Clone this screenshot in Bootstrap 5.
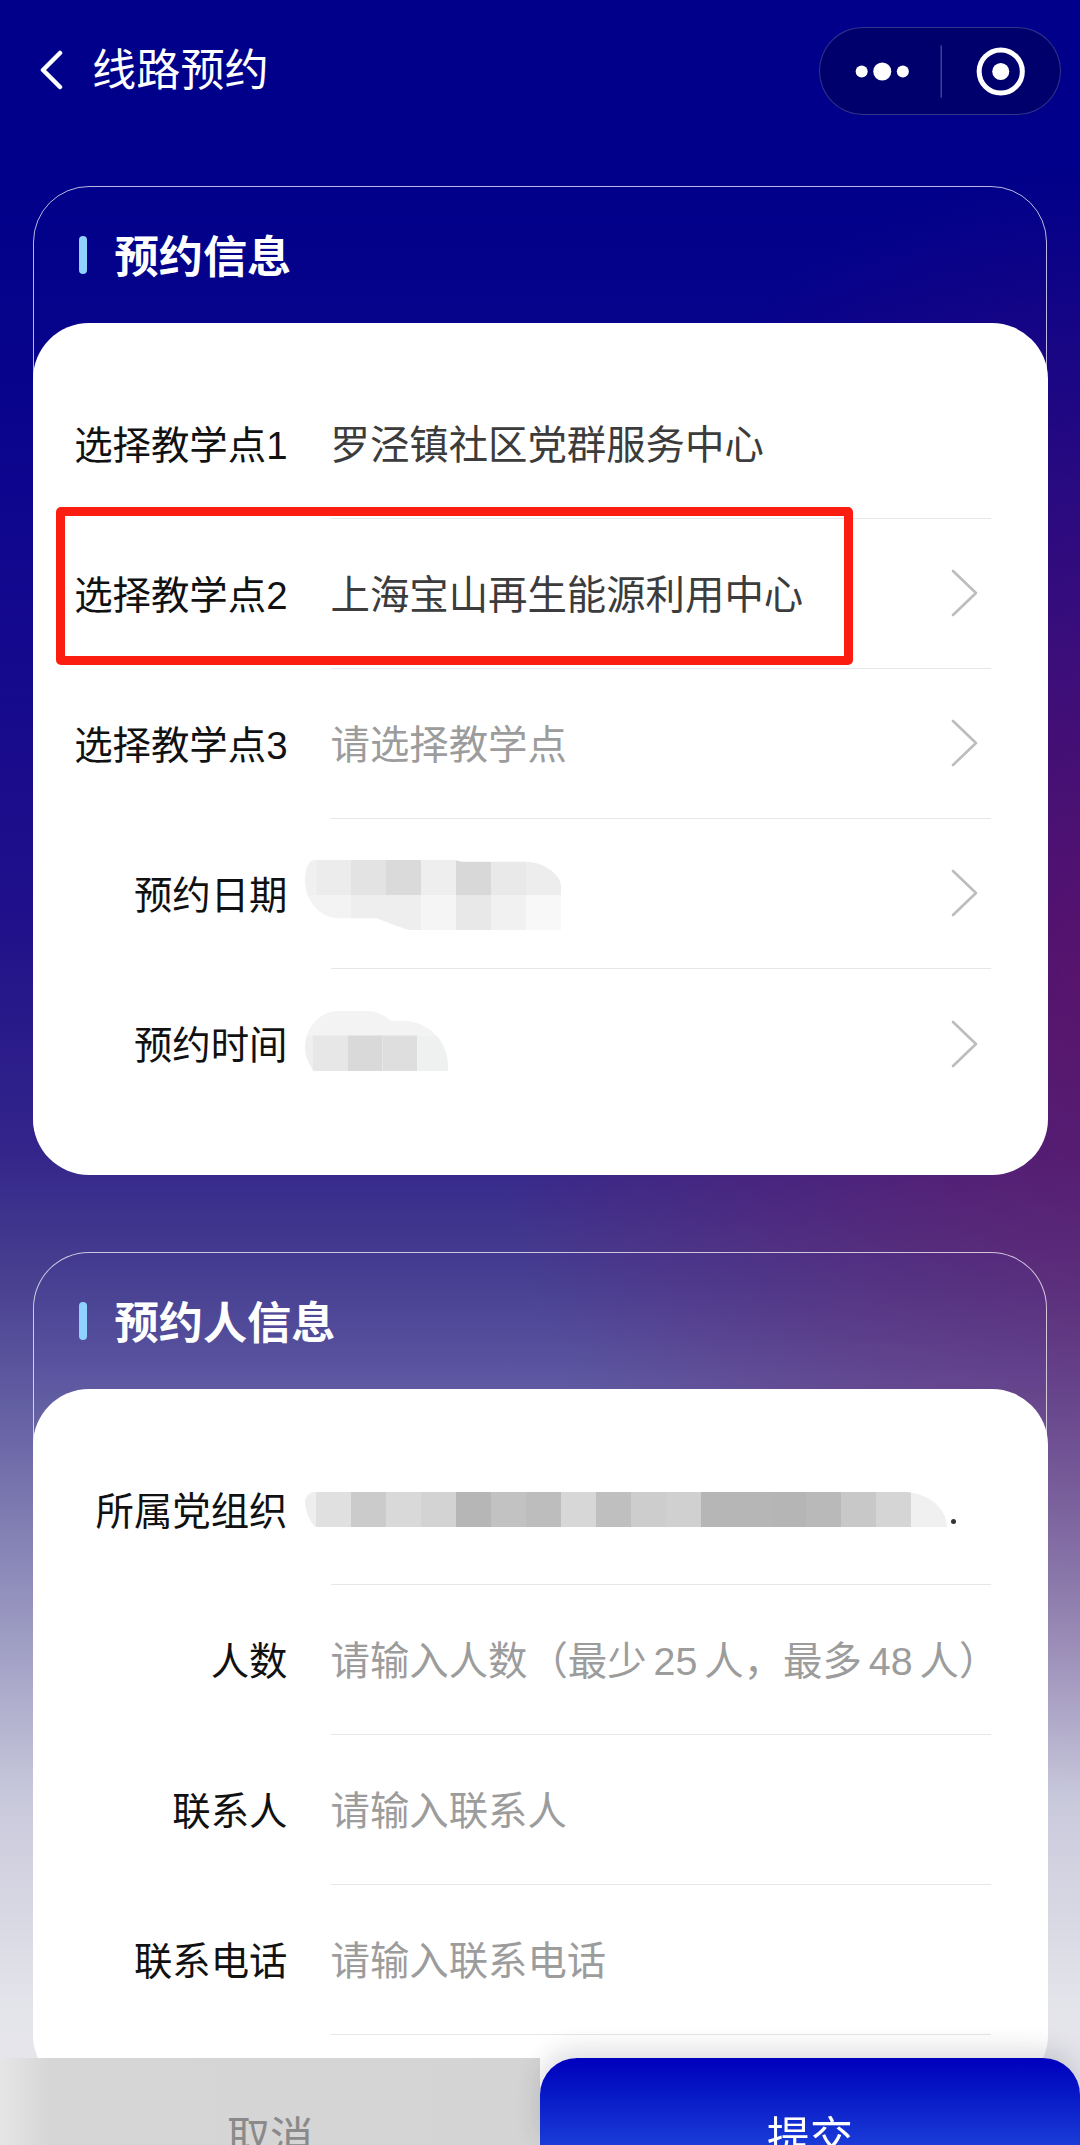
<!DOCTYPE html>
<html lang="zh-CN">
<head>
<meta charset="utf-8">
<title>线路预约</title>
<link rel="stylesheet" href="https://cdn.jsdelivr.net/npm/bootstrap@5.3.0/dist/css/bootstrap.min.css">
<style>
html,body{height:2145px;overflow:hidden}
body{margin:0;font-family:"Liberation Sans","Noto Sans CJK SC",sans-serif;
background:
 radial-gradient(ellipse 640px 820px at 1120px 980px,rgba(118,20,92,.66),rgba(118,20,92,0) 100%),
 linear-gradient(180deg,#00008a 0,#00008a 180px,#12088e 600px,#1f0f8a 900px,#33258a 1150px,#494090 1280px,#615da2 1400px,#9492bd 1600px,#c9c9dc 1800px,#e3e3ea 2000px,#e8e8ec 2145px)}
.top-bar{height:141px;margin-bottom:45px;padding:0 19px 0 39px}
.back-ico{width:24px;height:40px;margin-right:29px;flex:none}
.page-title{font-size:44.2px;line-height:1;color:#fff;padding-top:2px}
.capsule{width:242px;height:88px;border-radius:44px;border:1.5px solid rgba(255,255,255,.2);background:rgba(0,0,70,.42)}
.capsule svg{display:block;width:100%;height:100%}
.panel{margin:0 33px 78px;border:1.5px solid rgba(255,255,255,.72);border-radius:56px}
.panel-soft{background:linear-gradient(180deg,rgba(50,50,170,.08),rgba(90,90,200,.06) 130px,rgba(90,90,200,0) 140px)}
.panel-head{height:135.5px;padding-left:44.5px}
.panel-tick{width:8px;height:38px;border-radius:4px;background:#90d2ff;margin-right:28px}
.panel-name{font-size:44.2px;line-height:1;font-weight:700;color:#fff;padding-top:6px}
.sheet{margin:0 -1.5px -1.5px;padding:46px 0 56px;background:#fff;border-radius:56px}
.line{height:150px;font-size:38.4px;line-height:1}
.line-label{width:255px;flex:none;color:#111;padding-top:6px}
.line-body{margin:0 57px 0 43px;border-bottom:1.5px solid #e6e6e6;font-size:39.4px;color:#3c3c3c;min-width:0}
.line-body>span{padding-top:6px}
.hint{color:#9c9c9c}
.gap-paren{margin-left:1px}
.tight-words{word-spacing:-4px}
.chev{width:27px;height:48px;margin-right:13px;flex:none}
.redact{margin-left:-26px;flex:none;display:block}
.redact-date{margin-top:4px}
.redact-time{margin-bottom:6px}
.dot-end{margin-left:4px;margin-top:24px;width:5px;height:5px;border-radius:50%;background:#333;flex:none}
.mark-box{left:23px;top:-12px;width:797px;height:158px;border:9px solid #fb1e10;border-radius:5px;z-index:2}
.action-bar{height:87px;z-index:5}
.act{flex:1 1 50%;height:87px;padding:50px 0 0;border:0;font-size:43px;line-height:60px;overflow:hidden}
.act-cancel,.act-cancel:hover{background:linear-gradient(90deg,#e6e6e6 0,#d6d6d6 50px,#d4d4d4 100%);color:#8a8a8a;border-radius:0}
.act-submit,.act-submit:hover{background:linear-gradient(180deg,#0000bd 0,#0514c4 35%,#1a3cd8 100%);color:#fff;border-radius:37px 37px 0 0;box-shadow:0 -8px 26px rgba(40,40,60,.16)}
</style>
</head>
<body>
<header class="top-bar d-flex align-items-center justify-content-between">
  <div class="d-flex align-items-center">
    <svg class="back-ico" viewBox="0 0 24 40" fill="none" stroke="#fff" stroke-width="4.5" stroke-linecap="round" stroke-linejoin="round"><path d="M21 3 4 20l17 17"/></svg>
    <span class="page-title">线路预约</span>
  </div>
  <div class="capsule">
    <svg viewBox="0 0 239 85" fill="#fff">
      <circle cx="41.500" cy="43" r="6"/><circle cx="62" cy="43" r="9"/><circle cx="82.500" cy="43" r="6"/>
      <rect x="120" y="17" width="1.500" height="52" fill="rgba(255,255,255,.25)"/>
      <circle cx="180" cy="43" r="21.500" fill="none" stroke="#fff" stroke-width="5"/><circle cx="180" cy="43" r="8.500"/>
    </svg>
  </div>
</header>

<main>
<section class="panel">
  <div class="panel-head d-flex align-items-center"><span class="panel-tick"></span><h2 class="panel-name m-0">预约信息</h2></div>
  <div class="sheet">
    <div class="line d-flex align-items-center">
      <div class="line-label text-end">选择教学点1</div>
      <div class="line-body flex-grow-1 align-self-stretch d-flex align-items-center"><span>罗泾镇社区党群服务中心</span></div>
    </div>
    <div class="line d-flex align-items-center position-relative">
      <div class="mark-box position-absolute"></div>
      <div class="line-label text-end">选择教学点2</div>
      <div class="line-body flex-grow-1 align-self-stretch d-flex align-items-center justify-content-between"><span>上海宝山再生能源利用中心</span>
        <svg class="chev" viewBox="0 0 27 48" fill="none" stroke="#bdbdbd" stroke-width="2.600" stroke-linecap="round" stroke-linejoin="round"><path d="M2 2l23 22L2 46"/></svg></div>
    </div>
    <div class="line d-flex align-items-center">
      <div class="line-label text-end">选择教学点3</div>
      <div class="line-body flex-grow-1 align-self-stretch d-flex align-items-center justify-content-between"><span class="hint">请选择教学点</span>
        <svg class="chev" viewBox="0 0 27 48" fill="none" stroke="#bdbdbd" stroke-width="2.600" stroke-linecap="round" stroke-linejoin="round"><path d="M2 2l23 22L2 46"/></svg></div>
    </div>
    <div class="line d-flex align-items-center">
      <div class="line-label text-end">预约日期</div>
      <div class="line-body flex-grow-1 align-self-stretch d-flex align-items-center justify-content-between">
        <svg class="redact redact-date" width="256" height="70" viewBox="30 33 768 210">
          <defs><clipPath id="c1"><path d="M30 95C30 50 45 33 60 33H480L500 38H690C750 38 798 80 798 110V243H345C310 235 290 225 245 208H130C70 205 30 150 30 95Z"/></clipPath></defs>
          <g clip-path="url(#c1)">
            <rect x="30" y="33" width="32" height="105" fill="#f0f0f0"/><rect x="62" y="33" width="106" height="105" fill="#ececec"/><rect x="168" y="33" width="105" height="105" fill="#e3e3e3"/><rect x="273" y="33" width="105" height="105" fill="#dadada"/><rect x="378" y="33" width="105" height="105" fill="#eeeeee"/><rect x="483" y="33" width="105" height="105" fill="#d8d8d8"/><rect x="588" y="33" width="105" height="105" fill="#e9e9e9"/><rect x="693" y="33" width="105" height="105" fill="#ededed"/>
            <rect x="30" y="138" width="138" height="105" fill="#f3f3f3"/><rect x="168" y="138" width="210" height="105" fill="#eeeeee"/><rect x="378" y="138" width="105" height="105" fill="#f5f5f5"/><rect x="483" y="138" width="105" height="105" fill="#e8e8e8"/><rect x="588" y="138" width="105" height="105" fill="#f1f1f1"/><rect x="693" y="138" width="105" height="105" fill="#f8f8f8"/>
          </g>
        </svg>
        <svg class="chev" viewBox="0 0 27 48" fill="none" stroke="#bdbdbd" stroke-width="2.600" stroke-linecap="round" stroke-linejoin="round"><path d="M2 2l23 22L2 46"/></svg></div>
    </div>
    <div class="line d-flex align-items-center">
      <div class="line-label text-end">预约时间</div>
      <div class="line-body border-0 flex-grow-1 align-self-stretch d-flex align-items-center justify-content-between">
        <svg class="redact redact-time" width="143" height="60" viewBox="40 485 430 180">
          <defs><clipPath id="c2"><path d="M40 595C40 530 90 485 140 485H235C265 488 285 505 300 514H340C420 520 470 580 470 650V665H65C50 640 40 620 40 595Z"/></clipPath></defs>
          <g clip-path="url(#c2)">
            <rect x="40" y="485" width="430" height="73" fill="#f3f3f3"/>
            <rect x="40" y="558" width="22" height="107" fill="#efefef"/><rect x="62" y="558" width="106" height="107" fill="#e7e7e7"/><rect x="168" y="558" width="105" height="107" fill="#d9d9d9"/><rect x="273" y="558" width="105" height="107" fill="#dedede"/><rect x="378" y="558" width="92" height="107" fill="#eff0f0"/>
          </g>
        </svg>
        <svg class="chev" viewBox="0 0 27 48" fill="none" stroke="#bdbdbd" stroke-width="2.600" stroke-linecap="round" stroke-linejoin="round"><path d="M2 2l23 22L2 46"/></svg></div>
    </div>
  </div>
</section>

<section class="panel panel-soft mb-0">
  <div class="panel-head d-flex align-items-center"><span class="panel-tick"></span><h2 class="panel-name m-0">预约人信息</h2></div>
  <div class="sheet">
    <div class="line d-flex align-items-center">
      <div class="line-label text-end">所属党组织</div>
      <div class="line-body flex-grow-1 align-self-stretch d-flex align-items-center">
        <svg class="redact" width="642" height="35" viewBox="0 0 642 35">
          <defs><clipPath id="c3"><path d="M10 0H600C625 1 642 18 642 35H10C4 28 0 18 0 10 0 5 4 0 10 0Z"/></clipPath></defs>
          <g clip-path="url(#c3)">
            <rect x="0" width="11" height="35" fill="#eeeeee"/><rect x="11" width="35" height="35" fill="#e0e0e0"/><rect x="46" width="35" height="35" fill="#cbcbcb"/><rect x="81" width="35" height="35" fill="#d9d9d9"/><rect x="116" width="35" height="35" fill="#d3d3d3"/><rect x="151" width="35" height="35" fill="#b6b6b6"/><rect x="186" width="35" height="35" fill="#c2c2c2"/><rect x="221" width="35" height="35" fill="#bdbdbd"/><rect x="256" width="35" height="35" fill="#d7d7d7"/><rect x="291" width="35" height="35" fill="#bfbfbf"/><rect x="326" width="35" height="35" fill="#cdcdcd"/><rect x="361" width="35" height="35" fill="#d0d0d0"/><rect x="396" width="35" height="35" fill="#b6b6b6"/><rect x="431" width="35" height="35" fill="#b6b6b6"/><rect x="466" width="35" height="35" fill="#b5b5b5"/><rect x="501" width="35" height="35" fill="#b9b9b9"/><rect x="536" width="35" height="35" fill="#c8c8c8"/><rect x="571" width="35" height="35" fill="#d5d5d5"/><rect x="606" width="36" height="35" fill="#f0f0f0"/>
          </g>
        </svg>
        <div class="dot-end"></div></div>
    </div>
    <div class="line d-flex align-items-center">
      <div class="line-label text-end">人数</div>
      <div class="line-body flex-grow-1 align-self-stretch d-flex align-items-center"><span class="hint text-nowrap tight-words">请输入人数<b class="fw-normal gap-paren">（</b>最少 25 人，最多 48 人）</span></div>
    </div>
    <div class="line d-flex align-items-center">
      <div class="line-label text-end">联系人</div>
      <div class="line-body flex-grow-1 align-self-stretch d-flex align-items-center"><span class="hint">请输入联系人</span></div>
    </div>
    <div class="line d-flex align-items-center">
      <div class="line-label text-end">联系电话</div>
      <div class="line-body flex-grow-1 align-self-stretch d-flex align-items-center"><span class="hint">请输入联系电话</span></div>
    </div>
  </div>
</section>
</main>

<footer class="action-bar fixed-bottom d-flex">
  <button type="button" class="act act-cancel">取消</button>
  <button type="button" class="act act-submit">提交</button>
</footer>
<script src="https://cdn.jsdelivr.net/npm/bootstrap@5.3.0/dist/js/bootstrap.bundle.min.js"></script>
</body>
</html>
